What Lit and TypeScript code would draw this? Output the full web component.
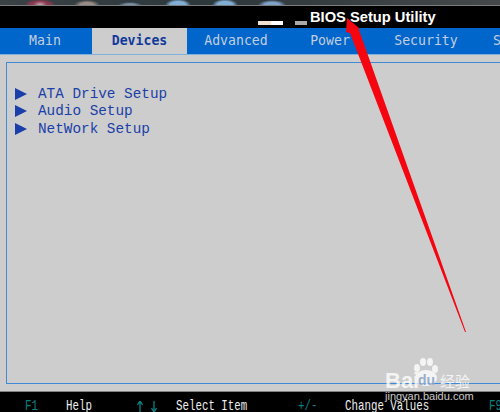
import { LitElement, html, css, svg } from "lit";
import { customElement } from "lit/decorators.js";

@customElement("app-root")
export class AppRoot extends LitElement {
  static styles = css`
    :host { display: block; width: 500px; height: 412px; position: relative; overflow: hidden; background: #000; }
    .strip {
      height: 5px;
      background:
        radial-gradient(ellipse 7px 4px at 40px 100%, #c8b0bc, transparent),
        radial-gradient(ellipse 16px 6px at 40px 100%, #8e3850 60%, transparent),
        radial-gradient(ellipse 13px 5px at 87px 100%, #9a8c86 50%, transparent),
        radial-gradient(ellipse 12px 3px at 130px 100%, #7a90a8 40%, transparent),
        radial-gradient(ellipse 13px 6px at 178px 100%, #80aed4 60%, transparent),
        radial-gradient(ellipse 13px 6px at 225px 100%, #80aed4 60%, transparent),
        radial-gradient(ellipse 14px 5px at 272px 100%, #7ea2c8 55%, transparent),
        linear-gradient(90deg, #3a4246, #2c383c 40%, #343c40 60%, #44484a);
    }
    .rule { height: 1px; background: #7a7c7e; }
    .title { height: 22px; background: #000; display: flex; align-items: center; position: relative; }
    .bar { position: absolute; height: 4px; top: 15px; }
    .b1 { left: 258px; width: 25px; background: linear-gradient(90deg, #f0e2cf 0 50%, #fff 55%); }
    .b2 { left: 295px; width: 12px; background: #a9a9a9; }
    .name { margin-left: 310px; font: bold 14.7px "Liberation Sans", sans-serif; color: #fff; }
    .tabs { height: 27px; background: #0066cc; display: flex; font: 13.2px/25px "DejaVu Sans Mono", monospace; color: #c4cede; overflow: hidden; border-bottom: 1px solid #7fb0de; box-sizing: border-box; }
    .tab { flex: none; text-align: center; box-sizing: border-box; }
    .first { padding-right: 2px; }
    .save { text-align: left; padding-left: 16px; }
    .active { background: #cdcdcd; color: #123a9c; font-weight: bold; }
    .body { height: 337px; background: #cdcdcd; box-sizing: border-box; padding: 7px 0 7px 6px; border-bottom: 1px solid #808080; }
    .panel { height: 100%; box-sizing: border-box; border: 1px solid #3f8bd8; border-right: none; padding-top: 22.5px; }
    .row { display: flex; align-items: center; height: 17.3px; font: 14.35px "Liberation Mono", monospace; color: #1a3fa8; }
    .row svg { margin: 0 11px 0 8px; flex: none; }
    .foot { position: absolute; left: 0; right: 0; top: 396px; height: 16px; font: 14.4px/20px "Liberation Mono", monospace; color: #eee; white-space: pre; }
    .foot span { position: absolute; top: 0; transform: scaleX(0.75); transform-origin: left center; }
    .foot .k { color: #0a8080; }
    .foot svg { position: absolute; top: 5px; }
    .arrow { position: absolute; left: 0; top: 0; pointer-events: none; }
    .wm { position: absolute; left: 385px; top: 358px; color: #fff; opacity: .78; font-family: "Liberation Sans", sans-serif; }
    .wm .logo { position: absolute; left: 0; top: 10px; font-size: 22px; font-weight: bold; }
    .wm .du { position: absolute; left: 33px; top: 14px; font-size: 14px; font-weight: bold; color: #8aa6c8; }
    .wm .cn { position: absolute; left: 55px; top: 12px; font: 15px "Noto Sans CJK SC", sans-serif; white-space: nowrap; }
    .wm .url { position: absolute; left: 0; top: 32px; font-size: 11px; white-space: nowrap; }
    .wm svg { position: absolute; left: 27px; top: 0; }
  `;

  private updown(x: number, down: boolean) {
    const d = down ? "M3 0V10M0.5 7L3 11L5.5 7" : "M3 11V1M0.5 4L3 0L5.5 4";
    return html`<svg style="left:${x}px" width="6" height="11" viewBox="0 0 6 11"><path d=${d} fill="none" stroke="#0a8080" stroke-width="1.3"/></svg>`;
  }

  render() {
    const tabs: [string, number, string][] = [["Main", 92, "first"], ["Devices", 95, "active"], ["Advanced", 98, ""], ["Power", 90, ""], ["Security", 102, ""]];
    const items = ["ATA Drive Setup", "Audio Setup", "NetWork Setup"];
    return html`
      <div class="strip"></div>
      <div class="rule"></div>
      <div class="title"><div class="bar b1"></div><div class="bar b2"></div><div class="name">BIOS Setup Utility</div></div>
      <div class="tabs">
        ${tabs.map(([t, w, c]) => html`<div class="tab ${c}" style="width:${w}px">${t}</div>`)}
        <div class="tab save" style="width:23px">S</div>
      </div>
      <div class="body"><div class="panel">
        ${items.map(t => html`<div class="row"><svg width="12" height="12" viewBox="0 0 12 12"><path d="M0 0L12 6L0 12Z" fill="#1a3fa8"/></svg>${t}</div>`)}
      </div></div>
      <div class="foot">
        <span class="k" style="left:25px">F1</span><span style="left:66px">Help</span>
        ${this.updown(137, false)}${this.updown(151, true)}<span style="left:176px">Select Item</span>
        <span class="k" style="left:298px">+/-</span><span style="left:345px">Change Values</span>
        <span class="k" style="left:489px">F9</span>
      </div>
      <svg class="arrow" width="500" height="412" viewBox="0 0 500 412">
        ${svg`<path d="M347 18L359 28L359 30L466 332L465 332L350 33L346 32Z" fill="#f5050f"/>`}
      </svg>
      <div class="wm">
        <svg width="26" height="30" viewBox="0 0 26 30" fill="#fff"><ellipse cx="5" cy="10" rx="3" ry="4"/><ellipse cx="11" cy="4" rx="3" ry="4"/><ellipse cx="18" cy="4" rx="3" ry="4"/><ellipse cx="23" cy="11" rx="3" ry="4"/><ellipse cx="14" cy="20" rx="11" ry="8"/></svg>
        <div class="logo">Bai</div><div class="du">du</div><div class="cn">经验</div><div class="url">jingyan.baidu.com</div>
      </div>
    `;
  }
}
